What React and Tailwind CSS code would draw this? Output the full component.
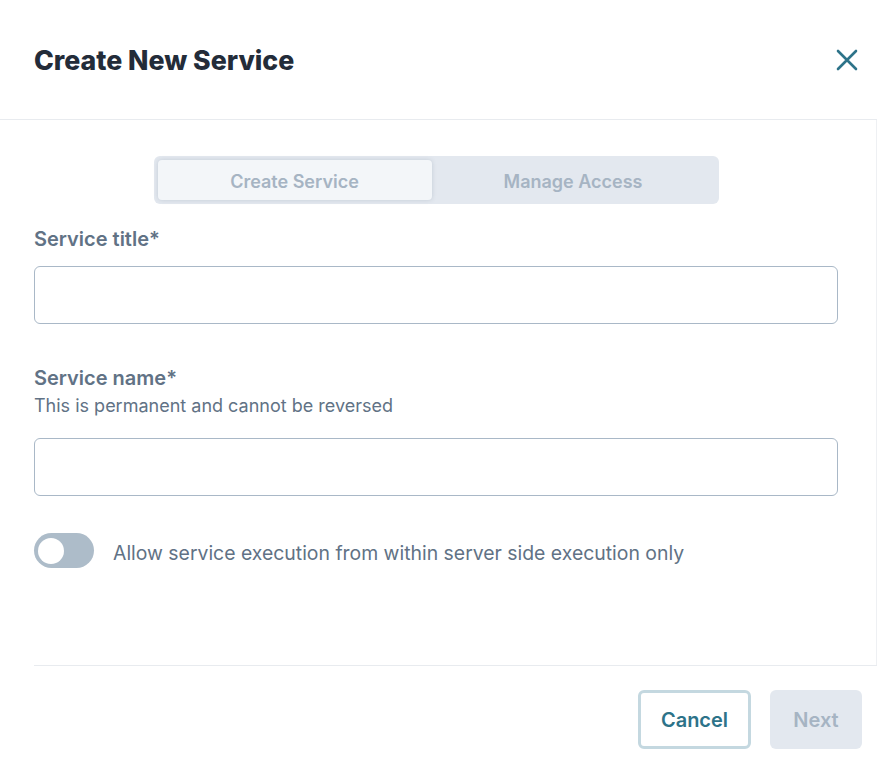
import React, { useState } from 'react';

const font = { fontFamily: 'Inter, "Noto Sans", sans-serif' };

// Close icon
const CloseIcon = () => (
  <svg width="22" height="22" viewBox="0 0 22 22" fill="none" stroke="#2d7389" strokeWidth="2.6" strokeLinecap="round">
    <path d="M2 2 L20 20 M20 2 L2 20" />
  </svg>
);

const Field = ({ label, hint }) => (
  <div className="flex flex-col">
    <label className="text-[20px] font-semibold leading-7 text-[#617285]">{label}</label>
    {hint && <p className="mt-[2px] text-[18px] leading-6 text-[#617285]">{hint}</p>}
    <input
      type="text"
      className={`${hint ? 'mt-[20px]' : 'mt-[13px]'} h-[58px] w-full rounded-md border border-[#a9b8c7] bg-white px-3 outline-none`}
    />
  </div>
);

export default function App() {
  const [tab, setTab] = useState('create');
  const [serverOnly, setServerOnly] = useState(false);

  return (
    <div className="h-[769px] w-[877px] overflow-hidden bg-white" style={font}>
      {/* Header */}
      <div className="flex h-[120px] items-center justify-between border-b border-[#e8ebef] pl-[34px] pr-[14px] pt-[1px]">
        <h1 className="text-[26.7px] font-extrabold text-[#232c39]">Create New Service</h1>
        <button className="flex h-8 w-8 items-center justify-center">
          <CloseIcon />
        </button>
      </div>

      {/* Body */}
      <div className="flex h-[545px] flex-col border-r border-[#eef0f3] pl-[34px] pr-[38px] pt-9">
        <div className="mx-auto flex h-12 w-[565px] rounded-md bg-[#e3e8ef] p-1">
          <button
            onClick={() => setTab('create')}
            className={`w-[274px] rounded-[4px] pt-[3px] text-[18px] font-semibold text-[#a6b4c3] ${tab === 'create' ? 'bg-[#f3f6f9] shadow-[0_0_4px_rgba(100,116,139,0.25)]' : ''}`}
          >
            Create Service
          </button>
          <button
            onClick={() => setTab('access')}
            className={`flex-1 rounded-[4px] pt-[3px] text-[18px] font-semibold text-[#a6b4c3] ${tab === 'access' ? 'bg-[#f3f6f9] shadow-[0_0_4px_rgba(100,116,139,0.25)]' : ''}`}
          >
            Manage Access
          </button>
        </div>

        <div className="mt-[21px]">
          <Field label="Service title*" />
        </div>
        <div className="mt-[40px]">
          <Field label="Service name*" hint="This is permanent and cannot be reversed" />
        </div>

        <div className="mt-[37px] flex items-center gap-[19px]">
          <button
            onClick={() => setServerOnly(!serverOnly)}
            className={`flex h-[35px] w-[60px] shrink-0 items-center rounded-full px-1 ${serverOnly ? 'justify-end bg-[#2d7389]' : 'justify-start bg-[#adbcc9]'}`}
          >
            <span className="h-[26px] w-[26px] rounded-full bg-white" />
          </button>
          <span className="pt-1 text-[19.4px] leading-7 text-[#617285]">Allow service execution from within server side execution only</span>
        </div>
      </div>

      {/* Footer */}
      <div className="ml-[34px] flex justify-end gap-[19px] border-t border-[#e8ebef] pr-[15px] pt-6">
        <button className="h-[59px] w-[113px] rounded-md border-[3px] border-[#c4d8e0] bg-white text-[20px] font-semibold text-[#2d7389]">
          Cancel
        </button>
        <button className="h-[59px] w-[92px] rounded-md bg-[#e3e8ef] text-[20px] font-semibold text-[#a6b4c3]">
          Next
        </button>
      </div>
    </div>
  );
}
